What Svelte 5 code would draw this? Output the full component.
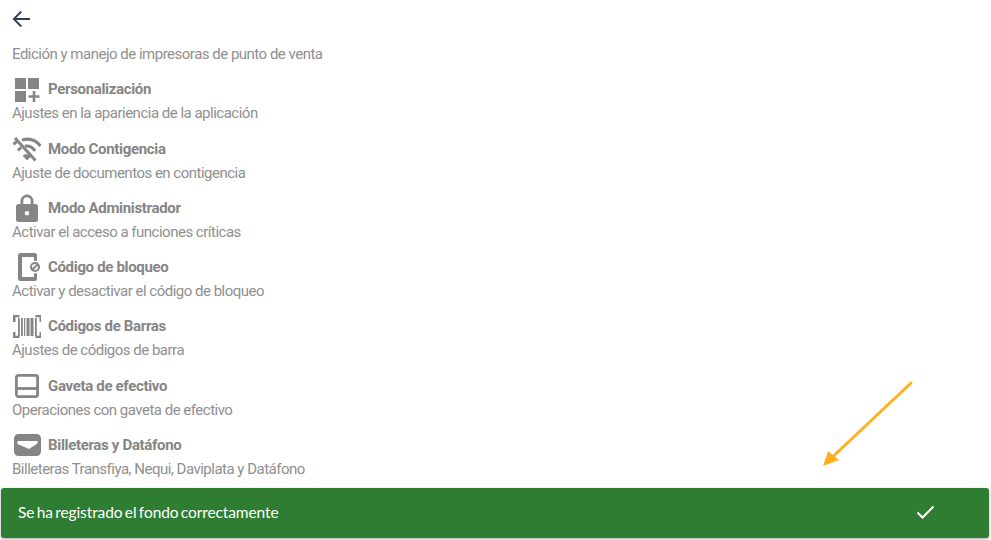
<script>
  const gray = "#858585";
</script>

<div class="page">
  <button class="back" aria-label="Volver">
    <svg width="24" height="24" viewBox="0 0 24 24"><path d="M21 12H5.500M12.300 4.500L4.800 12l7.500 7.500" fill="none" stroke="#2c3e50" stroke-width="1.800"/></svg>
  </button>

  <p class="sub first">Edición y manejo de impresoras de punto de venta</p>

  <div class="item">
    <div class="head">
      <svg class="ic" width="28" height="28" viewBox="0 0 28 28" fill={gray}>
        <rect x="2" y="3" width="11" height="11"/><rect x="15" y="3" width="11" height="11"/><rect x="2" y="16" width="11" height="11"/>
        <path d="M19.700 16h2.600v4.200h4.200v2.600h-4.200V27h-2.600v-4.200h-4.200v-2.600h4.200z"/>
      </svg>
      <span class="title">Personalización</span>
    </div>
    <p class="sub">Ajustes en la apariencia de la aplicación</p>
  </div>

  <div class="item">
    <div class="head">
      <svg class="ic" width="28" height="28" viewBox="0 0 28 28" fill="none" stroke={gray} stroke-width="3">
        <path d="M9 5c7-2 14 0 18.500 6"/><path d="M.5 9.500c1-1.200 2.300-2.200 3.700-3"/><path d="M12 11c4-.5 8 1.500 10 5"/><path d="M5 15.500c1-1.200 2-2.200 3.300-3"/><path d="M2 3l20.500 22.500"/>
        <path d="M9.500 20.500l4.500 5 4.500-4.500c-2.500-2.200-6.500-2.500-9-.5z" fill={gray} stroke="none"/>
      </svg>
      <span class="title">Modo Contigencia</span>
    </div>
    <p class="sub">Ajuste de documentos en contigencia</p>
  </div>

  <div class="item">
    <div class="head">
      <svg class="ic" width="28" height="28" viewBox="0 0 28 28" fill={gray}>
        <path fill-rule="evenodd" d="M7.500 10V7a6.500 6.500 0 0 1 13 0v3h2a2.500 2.500 0 0 1 2.500 2.500v13a2.500 2.500 0 0 1-2.500 2.500h-17A2.500 2.500 0 0 1 3 25.500v-13A2.500 2.500 0 0 1 5.500 10zm2.800 0h7.400V7a3.700 3.700 0 0 0-7.400 0zM14 17a2.300 2.300 0 1 0 0 4.600 2.300 2.300 0 0 0 0-4.600z"/>
      </svg>
      <span class="title">Modo Administrador</span>
    </div>
    <p class="sub">Activar el acceso a funciones críticas</p>
  </div>

  <div class="item">
    <div class="head">
      <svg class="ic" width="28" height="28" viewBox="0 0 28 28" fill={gray}>
        <path d="M7.500 0h14A2.500 2.500 0 0 1 24 2.500V8a7 7 0 0 0-3-.2V4H9v20h12v-3.800a7 7 0 0 0 3-.2v5.500a2.500 2.500 0 0 1-2.500 2.500h-14A2.500 2.500 0 0 1 5 25.500v-23A2.500 2.500 0 0 1 7.500 0z"/>
        <circle cx="22" cy="14" r="4" fill="none" stroke={gray} stroke-width="2"/>
        <path d="M19.200 16.800l5.600-5.600" stroke={gray} stroke-width="2"/>
      </svg>
      <span class="title">Código de bloqueo</span>
    </div>
    <p class="sub">Activar y desactivar el código de bloqueo</p>
  </div>

  <div class="item">
    <div class="head">
      <svg class="ic" width="28" height="28" viewBox="0 0 28 28" fill={gray}>
        <path d="M0 3h6.500v2.300H2.500V10H0zM22.500 3H29v7h-2.500V5.300h-4zM0 20h2.500v3.700h4V26H0zM26.500 20H29v6h-6.500v-2.300h4z"/>
        <rect x="5" y="6" width="1.800" height="18"/><rect x="8" y="6" width="1.800" height="18"/><rect x="11" y="6" width="1.200" height="18"/><rect x="13.500" y="6" width="3" height="18"/><rect x="17.500" y="6" width="3" height="18"/><rect x="22" y="6" width="1.800" height="18"/>
      </svg>
      <span class="title">Códigos de Barras</span>
    </div>
    <p class="sub">Ajustes de códigos de barra</p>
  </div>

  <div class="item">
    <div class="head">
      <svg class="ic" width="28" height="28" viewBox="0 0 28 28" fill="none" stroke={gray} stroke-width="2.800">
        <rect x="3.400" y="3.400" width="21.200" height="21.200" rx="2"/><path d="M3.400 16.500h21.200"/>
      </svg>
      <span class="title">Gaveta de efectivo</span>
    </div>
    <p class="sub">Operaciones con gaveta de efectivo</p>
  </div>

  <div class="item">
    <div class="head">
      <svg class="ic" width="28" height="28" viewBox="0 0 28 28" fill={gray}>
        <path fill-rule="evenodd" d="M5.500 3h18A4.500 4.500 0 0 1 28 7.500v13a4.500 4.500 0 0 1-4.500 4.500h-18A4.500 4.500 0 0 1 1 20.500v-13A4.500 4.500 0 0 1 5.500 3zM4.500 10v3L16 18l8.500-5.500V10z"/>
      </svg>
      <span class="title">Billeteras y Datáfono</span>
    </div>
    <p class="sub">Billeteras Transfiya, Nequi, Daviplata y Datáfono</p>
  </div>

  <svg class="arrow" width="100" height="95" viewBox="0 0 100 95">
    <path d="M91 5L13.500 78" stroke="#ffb01f" stroke-width="3" stroke-linecap="round"/>
    <path d="M3 88l5-15 11 9z" fill="#ffb01f"/>
  </svg>

  <div class="toast">
    <span>Se ha registrado el fondo correctamente</span>
    <svg width="24" height="24" viewBox="0 0 24 24"><path d="M4.500 12.500l5 5L20.500 6.500" fill="none" stroke="#fff" stroke-width="2"/></svg>
  </div>
</div>

<style>
  :global(body) {
    margin: 0;
    background: #fff;
  }

  .page {
    position: relative;
    width: 991px;
    height: 540px;
    overflow: hidden;
    padding: 7px 12px 0;
    box-sizing: border-box;
    font-family: Roboto, sans-serif;
  }

  .back {
    display: block;
    padding: 0;
    border: 0;
    background: none;
    width: 24px;
    height: 24px;
    margin-left: -3px;
  }

  .sub {
    margin: 0;
    font-size: 15px;
    letter-spacing: -0.5px;
    line-height: 20px;
    color: #8f8f8f;
  }

  .first {
    margin-top: 13px;
  }

  .item {
    margin-top: 11.3px;
  }

  .head {
    display: flex;
    align-items: center;
    height: 28px;
  }

  .ic {
    margin-left: 1px;
    margin-right: 7px;
    flex: none;
  }

  .title {
    font-size: 15px;
    letter-spacing: -0.33px;
    font-weight: 700;
    color: #858585;
  }

  .arrow {
    position: absolute;
    left: 820px;
    top: 378px;
  }

  .toast {
    position: absolute;
    left: 1px;
    top: 488px;
    width: 988px;
    height: 50px;
    box-sizing: border-box;
    padding: 0 52px 2px 17px;
    display: flex;
    align-items: center;
    justify-content: space-between;
    background: #2e7d32;
    border-radius: 3px;
    box-shadow: 0 1px 3px rgba(0, 0, 0, 0.35);
    color: #fff;
    font-family: Lato, sans-serif;
    font-size: 15.5px;
    letter-spacing: -0.1px;
    word-spacing: -1.5px;
  }
</style>
